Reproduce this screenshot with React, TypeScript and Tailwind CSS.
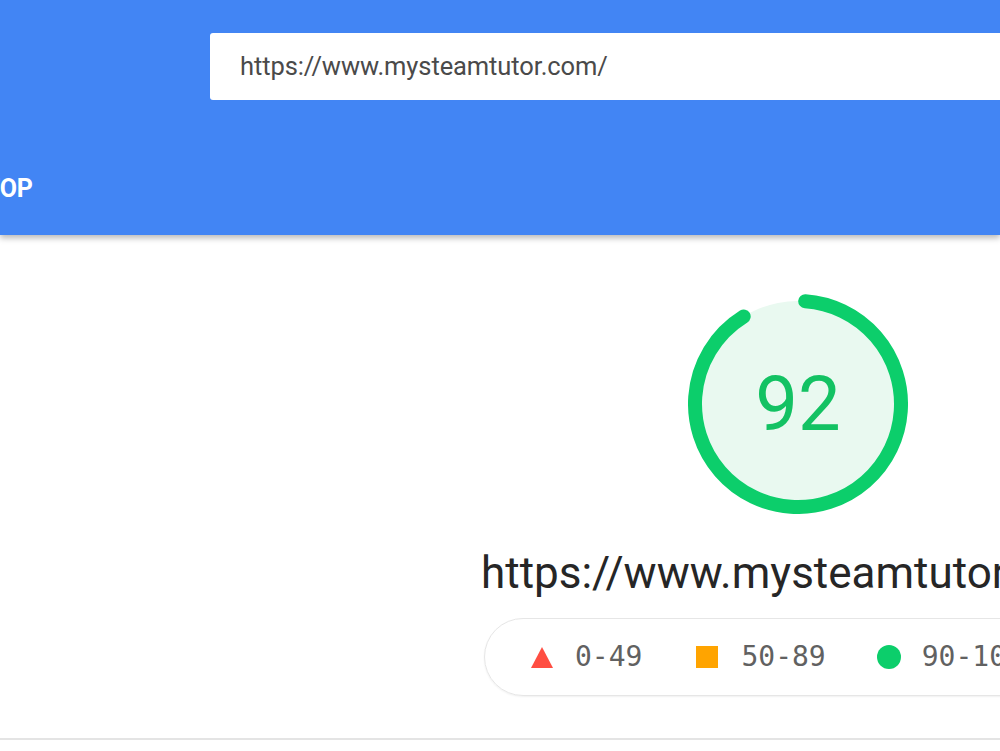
const Gauge = ({ score }: { score: number }) => {
  return (
    <div className="relative w-[220px] h-[220px] self-center">
      <svg width="220" height="220" viewBox="0 0 220 220">
        <circle cx="110" cy="110" r="103" fill="#e9f9f0" />
        <circle
          cx="110"
          cy="110"
          r="103"
          fill="none"
          stroke="#0cce6b"
          strokeWidth="14"
          strokeLinecap="round"
          strokeDasharray="582 647"
          transform="rotate(-86 110 110)"
        />
      </svg>
      <div className="absolute inset-0 flex items-center justify-center text-[76px] text-[#13c263] font-['Roboto',sans-serif]">
        {score}
      </div>
    </div>
  );
};

const App = () => {
  return (
    <div className="w-[1000px] h-[751px] overflow-hidden bg-white font-['Roboto',sans-serif]">
      <header className="relative z-10 h-[235px] bg-[#4285f4] shadow-[0_3px_6px_rgba(0,0,0,0.28)] flex flex-col">
        <div className="pl-[210px] pt-[33px]">
          <div className="h-[67px] w-[820px] bg-white rounded-[3px] flex items-center pl-[30px] text-[25.5px] tracking-[-0.1px] text-[#4a4a4a]">
            https://www.mysteamtutor.com/
          </div>
        </div>
        <div className="mt-[73px] w-[33px] overflow-hidden flex justify-end">
          <span className="whitespace-nowrap text-[25px] leading-[32px] font-bold text-white">DESKTOP</span>
        </div>
      </header>

      <main className="pt-[59px]">
        <div className="ml-[481px] w-[634px] flex flex-col items-start">
          <Gauge score={92} />
          <div className="mt-[34px] whitespace-nowrap text-[44px] leading-[50px] text-[#262626]">
            https://www.mysteamtutor.com/
          </div>
          <div className="mt-[20px] ml-[3px] h-[78px] rounded-full border border-[#e6e6e6] shadow-[0_1px_2px_rgba(0,0,0,0.06)] flex items-center pl-[46px] pr-[50px] whitespace-nowrap font-['DejaVu_Sans_Mono',monospace] text-[28px] text-[#616161]">
            <svg width="22" height="22" viewBox="0 0 22 22" className="mr-[22px]">
              <polygon points="11,1 22,22 0,22" fill="#ff4e42" />
            </svg>
            <span>0-49</span>
            <span className="ml-[54px] mr-[23px] w-[22px] h-[22px] bg-[#ffa400]" />
            <span>50-89</span>
            <span className="ml-[51px] mr-[21px] w-[24px] h-[24px] rounded-full bg-[#0cce6b]" />
            <span>90-100</span>
          </div>
        </div>
      </main>

      <div className="mt-[42px] h-[2px] bg-[#e4e4e4]" />
    </div>
  );
};

export default App;
